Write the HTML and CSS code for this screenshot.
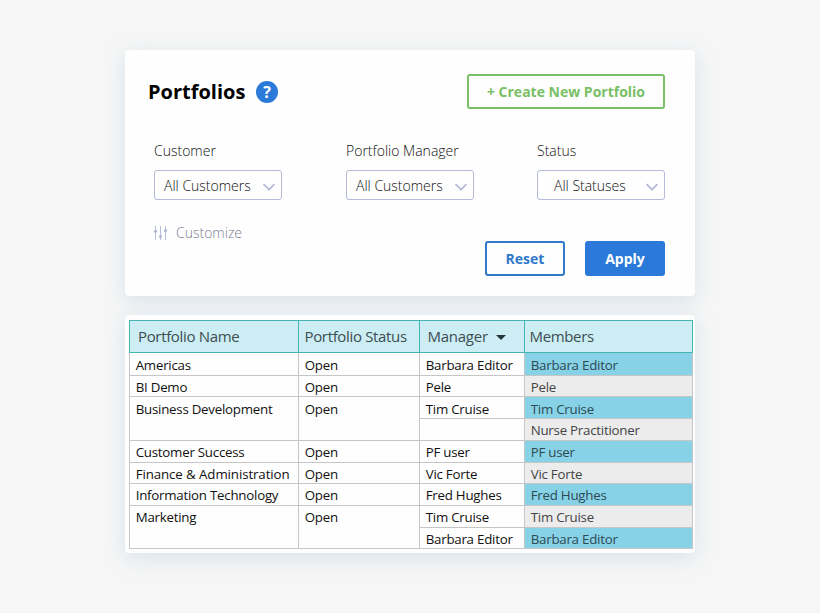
FILE: index.html
```html
<!DOCTYPE html>
<html lang="en">
<head>
<meta charset="utf-8">
<title>Portfolios</title>
<link rel="stylesheet" href="styles.css">
</head>
<body>
<main class="page">
  <section class="card filters">
    <header class="top">
      <h1>Portfolios</h1>
      <span class="help">?</span>
      <button class="btn create">+ Create New Portfolio</button>
    </header>
    <div class="fields">
      <div class="field">
        <label>Customer</label>
        <div class="select"><span>All Customers</span><svg width="12" height="8" viewBox="0 0 12 8"><path d="M.6 1 6 6.6 11.4 1"/></svg></div>
      </div>
      <div class="field">
        <label>Portfolio Manager</label>
        <div class="select"><span>All Customers</span><svg width="12" height="8" viewBox="0 0 12 8"><path d="M.6 1 6 6.6 11.4 1"/></svg></div>
      </div>
      <div class="field">
        <label>Status</label>
        <div class="select status"><span>All Statuses</span><svg width="12" height="8" viewBox="0 0 12 8"><path d="M.6 1 6 6.6 11.4 1"/></svg></div>
      </div>
    </div>
    <footer class="bottom">
      <div class="customize">
        <svg width="14" height="14" viewBox="0 0 14 14"><path d="M1.5 0v14M6.5 0v14M11.5 0v14"/><circle cx="1.5" cy="5.2" r="1.5"/><circle cx="6.5" cy="10.5" r="1.5"/><circle cx="11.5" cy="4.4" r="1.5"/></svg>
        <span>Customize</span>
      </div>
      <button class="btn reset">Reset</button>
      <button class="btn apply">Apply</button>
    </footer>
  </section>

  <section class="card list">
    <div class="table">
      <div class="th first">Portfolio Name</div><div class="th">Portfolio Status</div><div class="th mgr">Manager<i class="caret"></i></div><div class="th mem">Members</div>

      <div class="td low">Americas</div><div class="td low">Open</div><div class="td low">Barbara Editor</div><div class="td low blue">Barbara Editor</div>
      <div class="td">BI Demo</div><div class="td">Open</div><div class="td">Pele</div><div class="td gray">Pele</div>
      <div class="td low two">Business Development</div><div class="td low two">Open</div><div class="td low">Tim Cruise</div><div class="td low blue">Tim Cruise</div>
      <div class="td"></div><div class="td gray">Nurse Practitioner</div>
      <div class="td">Customer Success</div><div class="td">Open</div><div class="td">PF user</div><div class="td blue">PF user</div>
      <div class="td wide">Finance &amp; Administration</div><div class="td">Open</div><div class="td">Vic Forte</div><div class="td gray">Vic Forte</div>
      <div class="td">Information Technology</div><div class="td">Open</div><div class="td">Fred Hughes</div><div class="td blue">Fred Hughes</div>
      <div class="td two">Marketing</div><div class="td two">Open</div><div class="td">Tim Cruise</div><div class="td gray">Tim Cruise</div>
      <div class="td">Barbara Editor</div><div class="td blue">Barbara Editor</div>
    </div>
  </section>
</main>
</body>
</html>
```
FILE: styles.css
```css
* { box-sizing: border-box; }
body {
  margin: 0;
  background: #f6f6f6;
  font-family: "Open Sans", "Noto Sans", sans-serif;
}
.page {
  width: 570px;
  height: 613px;
  margin: 0 auto;
  padding-top: 50px;
}
.card {
  background: #fefefe;
  border-radius: 4px;
  box-shadow: 0 5px 20px rgba(160, 195, 220, .36);
}
.filters {
  height: 246px;
  padding: 24px 30px 0 29px;
}
.top {
  display: flex;
  height: 35px;
  align-items: center;
  margin-left: -6px;
}
h1 {
  margin: 0;
  width: 108px;
  font-size: 20px;
  line-height: 28px;
  font-weight: 700;
  color: #000;
}
.help {
  width: 22px;
  height: 22px;
  border-radius: 50%;
  background: #2b7ad9;
  color: #fff;
  font-size: 16px;
  line-height: 22px;
  font-weight: 700;
  text-align: center;
}
.btn {
  height: 35px;
  width: 80px;
  padding: 0;
  border: 2px solid;
  border-radius: 3px;
  background: #fefefe;
  font: 700 14px/31px "Open Sans", sans-serif;
}
.create {
  width: 198px;
  margin-left: auto;
  color: #79bf65;
}
.fields {
  display: grid;
  grid-template-columns: 128px 128px 128px;
  column-gap: 64px;
  margin: 31px -1px 0 0;
}
.field:last-child { margin: 0 1px 0 -1px; }
.field label {
  display: block;
  height: 30px;
  font-size: 14px;
  line-height: 22px;
  font-weight: 300;
  color: #111;
  white-space: nowrap;
}
.select {
  display: flex;
  align-items: center;
  justify-content: space-between;
  height: 30px;
  padding: 1px 6px 0 9px;
  border: 1px solid #b5bbd8;
  border-radius: 3px;
  font-size: 14px;
  line-height: 28px;
  font-weight: 300;
  color: #111;
}
.select.status { padding-left: 16px; }
.select svg {
  margin-top: 3px;
  fill: none;
  stroke: #b5bbd8;
  stroke-width: 1.8;
}
.bottom {
  display: flex;
  height: 76px;
  align-items: flex-end;
  gap: 20px;
}
.customize {
  display: flex;
  gap: 8px;
  align-items: center;
  align-self: flex-start;
  margin: 22px auto 0 0;
  font-size: 14px;
  line-height: 22px;
  font-weight: 300;
  color: #7b7f92;
}
.customize svg { stroke: #b9c0db; fill: #aab2d2; }
.customize circle { stroke: none; }
.reset { color: #3079cb; }
.apply { background: #2b7ad9; border-color: #2b7ad9; color: #fff; }
.list {
  height: 238px;
  margin-top: 19px;
  padding: 5px 2px 0 4px;
}
.table {
  display: grid;
  width: 564px;
  grid-template-columns: 169px 121px 105px 168px;
  grid-template-rows: 33px 23px 21px 22px 22px 22px 21px 22px 22px 21px;
  border-left: 1px solid #c6c6c6;
}
.th {
  display: flex;
  align-items: center;
  padding: 0 0 1px 5.5px;
  border: solid #43b5ae;
  border-width: 1px 1px 1px 0;
  background: #cdedf4;
  font-size: 15px;
  font-weight: 370;
  letter-spacing: -.34px;
  color: #3c4e52;
  white-space: nowrap;
}
.th.first { padding-left: 8px; margin-left: -1px; border-left-width: 1px; }
.th.mgr { padding-left: 7.5px; letter-spacing: -.25px; }
.th.mem { padding-left: 4.5px; }
.caret {
  margin: 3px 0 0 8px;
  border: solid transparent;
  border-width: 5px 5.5px 0;
  border-top-color: #25363a;
}
.td {
  padding: 1px 0 0 5.7px;
  border: solid #c6c6c6;
  border-width: 0 1px 1px 0;
  font-size: 13.3px;
  font-weight: 370;
  letter-spacing: -.24px;
  line-height: 20px;
  color: #111;
  white-space: nowrap;
  overflow: hidden;
}
.low { padding-top: 2px; }
.wide { letter-spacing: -.1px; }
.two { grid-row: span 2; }
.blue { background: #88d2e7; color: #2d4a52; }
.gray { background: #ececec; color: #444; }
```
